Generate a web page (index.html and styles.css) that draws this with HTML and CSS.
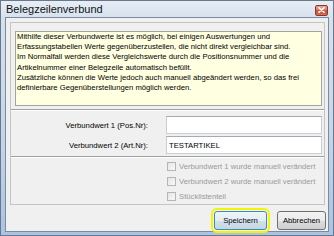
FILE: index.html
```html
<!DOCTYPE html>
<html lang="de">
<head>
<meta charset="utf-8">
<title>Belegzeilenverbund</title>
<link rel="stylesheet" href="styles.css">
</head>
<body>
<div class="window">
  <div class="titlebar">
    <span class="title">Belegzeilenverbund</span>
    <span class="close"><svg width="7" height="6" viewBox="0 0 7 6"><path d="M1 0.8 L6 5.2 M6 0.8 L1 5.2" stroke="#fff" stroke-width="1.6" stroke-linecap="round"/></svg></span>
  </div>
  <div class="client">
    <div class="panel">
      <div class="memo">Mithilfe dieser Verbundwerte ist es möglich, bei einigen Auswertungen und<br>Erfassungstabellen Werte gegenüberzustellen, die nicht direkt vergleichbar sind.<br>Im Normalfall werden diese Vergleichswerte durch die Positionsnummer und die<br>Artikelnummer einer Belegzeile automatisch befüllt.<br>Zusätzliche können die Werte jedoch auch manuell abgeändert werden, so das frei<br>definierbare Gegenüberstellungen möglich werden.</div>
      <div class="sep"></div>
      <div class="fields">
        <div class="row"><span class="label">Verbundwert 1 (Pos.Nr):</span><span class="input"></span></div>
        <div class="row"><span class="label">Verbundwert 2 (Art.Nr):</span><span class="input">TESTARTIKEL</span></div>
      </div>
      <div class="sep sep-low"></div>
      <div class="checks">
        <div class="check"><span class="box"></span><span>Verbundwert 1 wurde manuell verändert</span></div>
        <div class="check"><span class="box"></span><span>Verbundwert 2 wurde manuell verändert</span></div>
        <div class="check"><span class="box"></span><span>Stücklistenteil</span></div>
      </div>
    </div>
    <div class="buttons">
      <span class="btn btn-default">Speichern</span>
      <span class="btn btn-cancel">Abbrechen</span>
    </div>
  </div>
</div>
</body>
</html>
```
FILE: styles.css
```css
html, body {
  margin: 0;
  padding: 0;
}
body {
  width: 334px;
  height: 236px;
  overflow: hidden;
  font-family: "Liberation Sans", Arial, sans-serif;
  font-size: 7.7px;
  color: #000;
}
.window {
  box-sizing: border-box;
  width: 334px;
  height: 236px;
  border: 1px solid #6b7889;
  background: linear-gradient(#e6edf5 0, #d6e1ee 18px, #c3d4ea 60%, #aac3e4 100%);
  padding: 0 4px 3px 4px;
  display: flex;
  flex-direction: column;
}
.titlebar {
  height: 16px;
  display: flex;
  align-items: center;
  justify-content: space-between;
}
.title {
  font-size: 11px;
  padding-left: 1px;
  color: #111;
}
.close {
  width: 13px;
  height: 11px;
  margin-top: 2px;
  margin-right: 1px;
  box-sizing: border-box;
  border: 1px solid #8a3a2c;
  border-radius: 2px;
  background: linear-gradient(#e9a595 0, #d7765f 45%, #c44a2f 55%, #d2715a 100%);
  display: flex;
  align-items: center;
  justify-content: center;
}
.close svg {
  display: block;
}
.client {
  flex: 1;
  border: 1px solid #7d8a9b;
  background: #f0f0f0;
  display: flex;
  flex-direction: column;
}
.panel {
  margin: 4px 3px 0 4px;
  height: 183px;
  box-sizing: border-box;
  border: 1px solid #c4c4c4;
  display: flex;
  flex-direction: column;
}
.memo {
  margin: 8px 2px 0 4px;
  height: 76px;
  box-sizing: border-box;
  border: 1px solid #a3a3a3;
  background: #ffffe1;
  padding: 0 0 0 1px;
  line-height: 10.2px;
  white-space: nowrap;
  overflow: hidden;
}
.sep {
  margin-top: 3px;
  height: 0;
  border-top: 1px solid #a0a0a0;
  border-bottom: 1px solid #ffffff;
}
.sep-low {
  margin-top: 2px;
}
.fields {
  padding-top: 5px;
  display: flex;
  flex-direction: column;
  gap: 2px;
}
.row {
  display: flex;
  align-items: center;
  height: 18px;
}
.label {
  width: 137px;
  text-align: right;
  margin-right: 18px;
}
.input {
  width: 156px;
  height: 18px;
  box-sizing: border-box;
  border: 1px solid #c9ced6;
  border-top-color: #a5aab3;
  background: #fff;
  padding-left: 2px;
  display: flex;
  align-items: center;
}
.checks {
  padding: 1px 0 0 156px;
  display: flex;
  flex-direction: column;
}
.check {
  height: 15px;
  display: flex;
  align-items: center;
  gap: 3px;
  color: #9a9a9a;
}
.box {
  width: 9px;
  height: 9px;
  box-sizing: border-box;
  border: 1px solid #b5b5b5;
  background: linear-gradient(135deg, #e6e6e6, #f8f8f8);
}
.buttons {
  display: flex;
  justify-content: flex-end;
  gap: 10px;
  padding: 6px 2px 0 0;
}
.btn {
  height: 19px;
  box-sizing: border-box;
  border: 1px solid #707070;
  border-radius: 3px;
  background: linear-gradient(#f3f3f3 0, #ebebeb 50%, #dddddd 50%, #cfcfcf 100%);
  display: flex;
  align-items: center;
  justify-content: center;
}
.btn-default {
  width: 53px;
  border-color: #3c8db4;
  background: linear-gradient(#eef5f9 0, #e2edf4 50%, #d2e0ea 50%, #c6d7e3 100%);
  outline: 2px solid #f5f500;
  outline-offset: 1px;
}
.btn-cancel {
  width: 49px;
}
```
